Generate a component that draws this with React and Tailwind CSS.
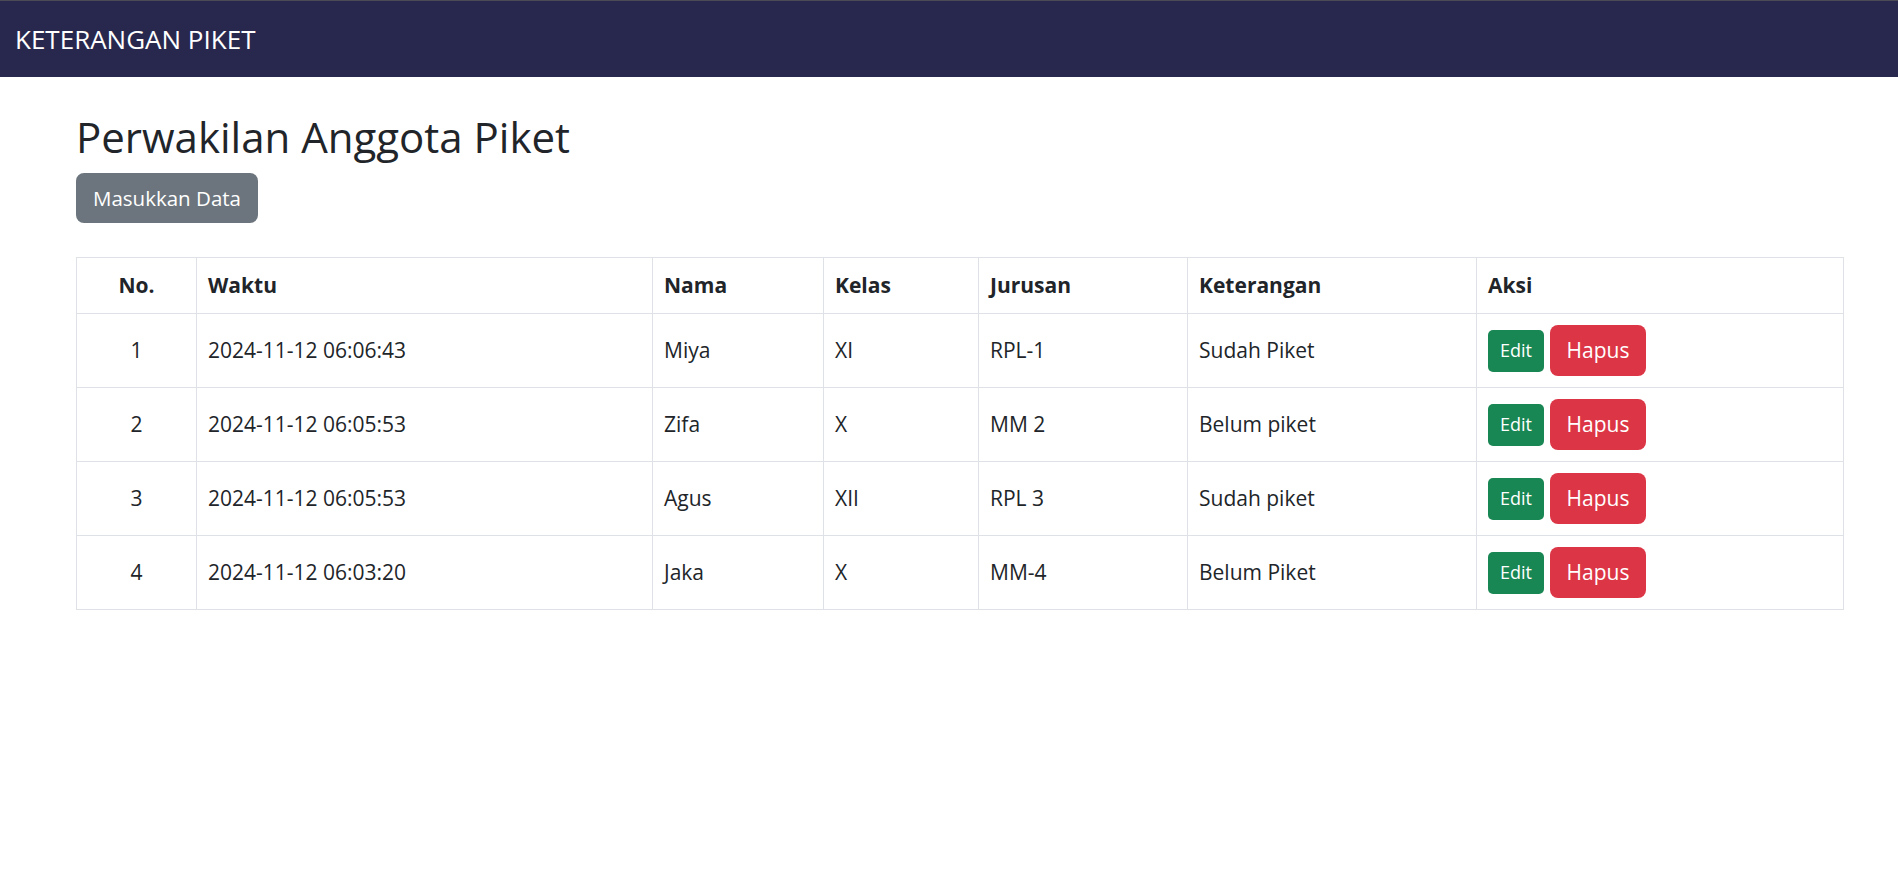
const rows = [
  { no: 1, waktu: '2024-11-12 06:06:43', nama: 'Miya', kelas: 'XI', jurusan: 'RPL-1', ket: 'Sudah Piket' },
  { no: 2, waktu: '2024-11-12 06:05:53', nama: 'Zifa', kelas: 'X', jurusan: 'MM 2', ket: 'Belum piket' },
  { no: 3, waktu: '2024-11-12 06:05:53', nama: 'Agus', kelas: 'XII', jurusan: 'RPL 3', ket: 'Sudah piket' },
  { no: 4, waktu: '2024-11-12 06:03:20', nama: 'Jaka', kelas: 'X', jurusan: 'MM-4', ket: 'Belum Piket' },
];

const cell = 'border border-[#dee2e6] px-[11px] align-middle';

const App = () => {
  return (
    <div className="min-h-screen bg-white text-[#212529] font-['Open_Sans',sans-serif]">
      <nav className="h-[77px] bg-[#28284f] border-t border-[#4b4b55] flex items-center px-[15px]">
        <span className="text-white text-[26px]">KETERANGAN PIKET</span>
      </nav>

      <div className="pl-[76px] pr-[54px] pt-[34px]">
        <h2 className="h-[51px] leading-[51px] text-[42px] font-normal mb-[11px]">Perwakilan Anggota Piket</h2>
        <button className="h-[50px] w-[182px] rounded-[8px] bg-[#6c757d] text-white text-[20.5px]">
          Masukkan Data
        </button>

        <table className="mt-[34px] w-full table-fixed border-collapse border border-[#dee2e6] text-[21px]">
          <colgroup>
            <col className="w-[120px]" />
            <col className="w-[456px]" />
            <col className="w-[171px]" />
            <col className="w-[155px]" />
            <col className="w-[209px]" />
            <col className="w-[289px]" />
            <col />
          </colgroup>
          <thead>
            <tr className="h-[56px]">
              <th className={`${cell} text-center font-bold`}>No.</th>
              <th className={`${cell} text-left font-bold`}>Waktu</th>
              <th className={`${cell} text-left font-bold`}>Nama</th>
              <th className={`${cell} text-left font-bold`}>Kelas</th>
              <th className={`${cell} text-left font-bold`}>Jurusan</th>
              <th className={`${cell} text-left font-bold`}>Keterangan</th>
              <th className={`${cell} text-left font-bold`}>Aksi</th>
            </tr>
          </thead>
          <tbody>
            {rows.map(r => (
              <tr key={r.no} className="h-[74px]">
                <td className={`${cell} text-center`}>{r.no}</td>
                <td className={cell}>{r.waktu}</td>
                <td className={cell}>{r.nama}</td>
                <td className={cell}>{r.kelas}</td>
                <td className={cell}>{r.jurusan}</td>
                <td className={cell}>{r.ket}</td>
                <td className={cell}>
                  <div className="flex items-center gap-[6px]">
                    <button className="h-[42px] w-[56px] rounded-[5px] bg-[#198754] text-white text-[18px]">Edit</button>
                    <button className="h-[51px] w-[96px] rounded-[8px] bg-[#dc3545] text-white text-[21px]">Hapus</button>
                  </div>
                </td>
              </tr>
            ))}
          </tbody>
        </table>
      </div>
    </div>
  );
};

export default App;
